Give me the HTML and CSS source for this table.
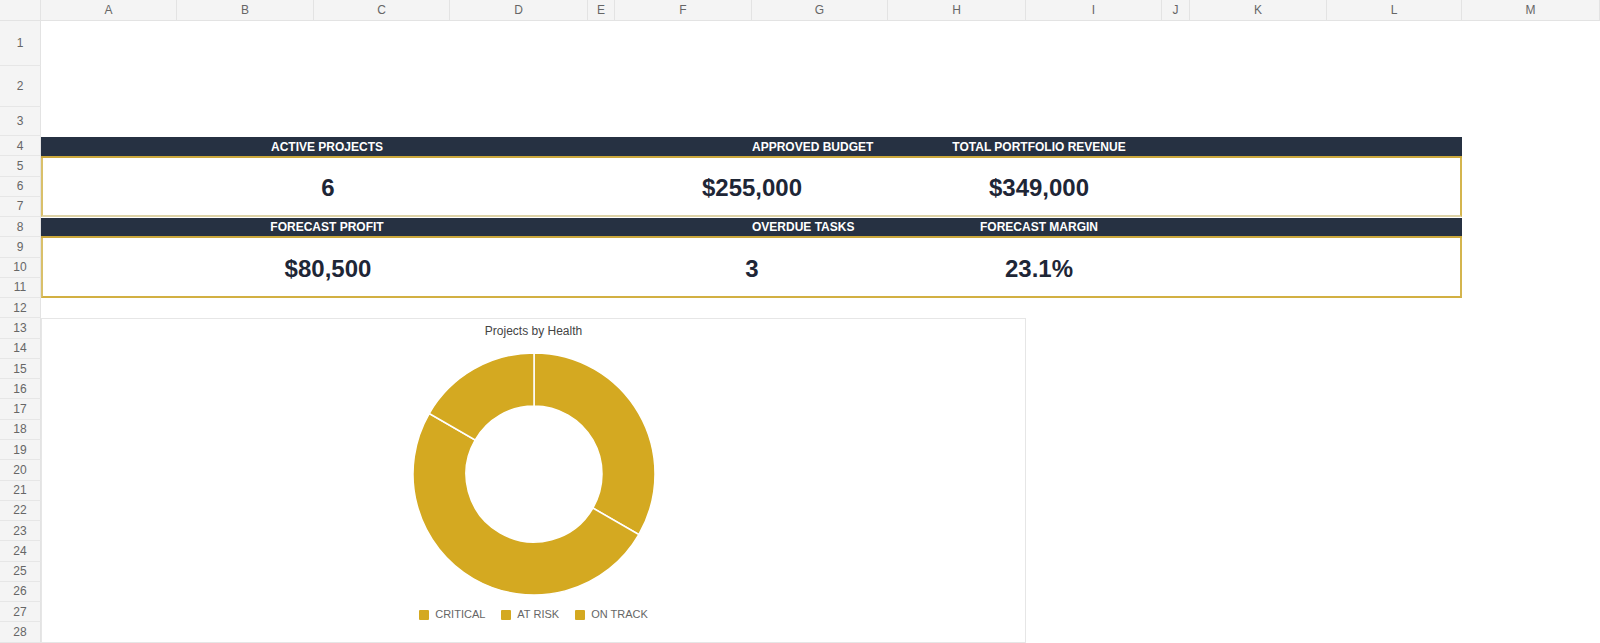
FILE: index.html
```html
<!DOCTYPE html>
<html lang="en">
<head>
<meta charset="utf-8">
<title>Portfolio Dashboard</title>
<link rel="stylesheet" href="styles.css">
</head>
<body>
<div class="sheet">
  <div class="colheads">
    <div class="corner"></div>
    <div class="ch">A</div><div class="ch">B</div><div class="ch">C</div><div class="ch">D</div>
    <div class="ch">E</div><div class="ch">F</div><div class="ch">G</div><div class="ch">H</div>
    <div class="ch">I</div><div class="ch">J</div><div class="ch">K</div><div class="ch">L</div>
    <div class="ch">M</div>
  </div>
  <div class="body">
    <div class="rowheads">
      <div class="rh r1">1</div><div class="rh r2">2</div><div class="rh r3">3</div>
      <div class="rh">4</div><div class="rh">5</div><div class="rh">6</div><div class="rh">7</div>
      <div class="rh">8</div><div class="rh">9</div><div class="rh">10</div><div class="rh">11</div>
      <div class="rh">12</div><div class="rh">13</div><div class="rh">14</div><div class="rh">15</div>
      <div class="rh">16</div><div class="rh">17</div><div class="rh">18</div><div class="rh">19</div>
      <div class="rh">20</div><div class="rh">21</div><div class="rh">22</div><div class="rh">23</div>
      <div class="rh">24</div><div class="rh">25</div><div class="rh">26</div><div class="rh">27</div>
      <div class="rh">28</div>
    </div>
    <div class="cells">
      <div class="kpi kpi-top">
        <div class="band">
          <div class="lbl c1">ACTIVE PROJECTS</div>
          <div class="lbl c2">APPROVED BUDGET</div>
          <div class="lbl c3">TOTAL PORTFOLIO REVENUE</div>
          <div></div>
        </div>
        <div class="vals vals-top">
          <div class="val">6</div>
          <div class="val">$255,000</div>
          <div class="val">$349,000</div>
          <div></div>
        </div>
      </div>
      <div class="kpi kpi-bottom">
        <div class="band">
          <div class="lbl c1">FORECAST PROFIT</div>
          <div class="lbl c2">OVERDUE TASKS</div>
          <div class="lbl c3">FORECAST MARGIN</div>
          <div></div>
        </div>
        <div class="vals vals-bottom">
          <div class="val">$80,500</div>
          <div class="val">3</div>
          <div class="val">23.1%</div>
          <div></div>
        </div>
      </div>
      <div class="chart">
        <div class="chart-title">Projects by Health</div>
        <svg class="donut" width="250" height="250" viewBox="0 0 250 250">
          <path class="seg" d="M125,4 A121,121 0 0 1 229.79,185.5 L183.89,159 A68,68 0 0 0 125,57 Z"/>
          <path class="seg" d="M229.79,185.5 A121,121 0 0 1 20.21,64.5 L66.11,91 A68,68 0 0 0 183.89,159 Z"/>
          <path class="seg" d="M20.21,64.5 A121,121 0 0 1 125,4 L125,57 A68,68 0 0 0 66.11,91 Z"/>
        </svg>
        <div class="legend">
          <div class="item"><span class="swatch"></span>CRITICAL</div>
          <div class="item"><span class="swatch"></span>AT RISK</div>
          <div class="item"><span class="swatch"></span>ON TRACK</div>
        </div>
      </div>
    </div>
  </div>
</div>
</body>
</html>
```
FILE: styles.css
```css
* { box-sizing: border-box; }
html, body { margin: 0; padding: 0; background: #fff; }
body { font-family: "Liberation Sans", Arial, Helvetica, sans-serif; }

.sheet { width: 1600px; height: 643px; overflow: hidden; display: flex; flex-direction: column; }

.colheads {
  display: grid;
  grid-template-columns: 41px 136px 137px 136px 138px 27px 137px 136px 138px 136px 28px 137px 135px 138px;
  height: 21px;
  flex: none;
}
.corner, .ch {
  background: #f4f4f4;
  border-right: 1px solid #e3e3e3;
  border-bottom: 1px solid #e3e3e3;
}
.ch {
  display: flex; align-items: center; justify-content: center;
  font-size: 12px; color: #666;
}

.body { display: flex; flex: 1; min-height: 0; }

.rowheads { width: 41px; flex: none; display: flex; flex-direction: column; }
.rh {
  height: 20.28px; flex: none;
  background: #f4f4f4;
  border-right: 1px solid #e3e3e3;
  border-bottom: 1px solid #e6e6e6;
  display: flex; align-items: center; justify-content: center;
  font-size: 12px; color: #666;
}
.rh.r1 { height: 45px; }
.rh.r2 { height: 41px; }
.rh.r3 { height: 29px; }

.cells {
  flex: 1;
  display: grid;
  grid-template-columns: 136px 137px 136px 138px 27px 137px 136px 138px 136px 28px 137px 135px 138px;
  grid-template-rows: 45px 41px 29px repeat(25, 20.28px);
}

.kpi { grid-column: 1 / 13; display: flex; flex-direction: column; }
.kpi-top { grid-row: 4 / 8; }
.kpi-bottom { grid-row: 8 / 12; }

.band {
  height: 21px; flex: none;
  margin-top: 1px;
  background: #263142;
  border-bottom: 2px solid #cba83c;
  display: grid;
  grid-template-columns: 572px 278px 296px 1fr;
  align-items: center;
  color: #fff; font-size: 12px; font-weight: bold;
}
.kpi-bottom .band { margin-top: 1px; height: 20px; }
.lbl { text-align: center; white-space: nowrap; }
.lbl.c2 { text-align: left; padding-left: 139px; }

.vals {
  flex: 1;
  display: grid;
  grid-template-columns: 570px 278px 296px 1fr;
  align-items: center;
  border-left: 2px solid #d9c06a;
  border-right: 2px solid #d4b54e;
  border-bottom: 2px solid #ddd2a6;
  font-size: 24px; font-weight: bold; color: #1e2636;
  padding-top: 3px;
}
.vals-bottom { border-bottom-color: #d2b043; padding-top: 3px; }
.val { text-align: center; white-space: nowrap; }

.chart {
  grid-column: 1 / 9;
  grid-row: 13 / 29;
  border: 1px solid #e6e6e6;
  display: flex; flex-direction: column; align-items: center;
  padding-top: 5px;
}
.chart-title { font-size: 12px; line-height: 14px; color: #444; }
.donut { display: block; margin-top: 11px; flex: none; }
.seg { fill: #d4a921; stroke: #fff; stroke-width: 1.5; }

.legend { display: flex; gap: 16px; margin-top: 8px; font-size: 11px; line-height: 14px; color: #666; }
.item { display: flex; align-items: center; gap: 6px; }
.swatch { width: 10px; height: 10px; background: #d4a921; border-radius: 1px; display: block; margin-top: 2px; }
```
